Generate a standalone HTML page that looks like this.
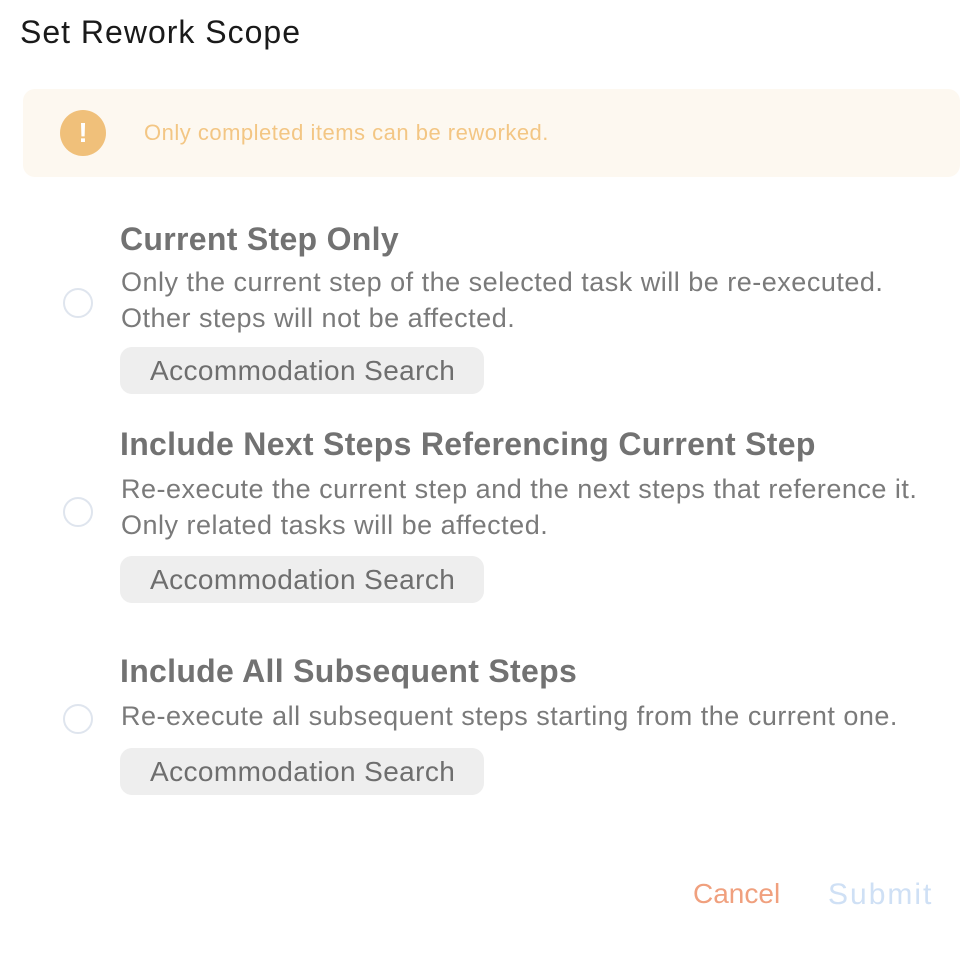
<!DOCTYPE html>
<html><head><style>
html,body{margin:0;padding:0;background:#fff;}
body{width:974px;height:970px;position:relative;overflow:hidden;font-family:"Liberation Sans",sans-serif;}
.a{position:absolute;white-space:nowrap;}
.title{left:20px;top:14px;font-size:32px;color:#1a1a1a;letter-spacing:1px;}
.alert{left:23px;top:89px;width:937px;height:88px;background:#fdf8f0;border-radius:12px;}
.ic{left:60px;top:110px;width:46px;height:46px;border-radius:50%;background:#f0c07a;color:#fff;font-weight:bold;font-size:28px;text-align:center;line-height:46px;}
.at{left:144px;top:120px;font-size:22px;color:#f3c684;letter-spacing:0.5px;}
.h{left:120px;font-size:32px;font-weight:bold;color:#727272;letter-spacing:0.3px;}
.d{left:121px;font-size:27px;color:#7a7a7a;line-height:36px;letter-spacing:0.5px;}
.chip{left:120px;width:364px;height:47px;background:#eeeeee;border-radius:12px;}
.chip span{position:absolute;left:30px;top:8px;font-size:28px;color:#6e6e6e;letter-spacing:0.4px;}
.r{left:63px;width:30px;height:30px;border:2px solid #dfe5ee;border-radius:50%;box-sizing:border-box;}
.btn{top:878px;}
</style></head><body>
<div class="a title">Set Rework Scope</div>
<div class="a alert"></div>
<div class="a ic">!</div>
<div class="a at">Only completed items can be reworked.</div>

<div class="a h" style="top:221px">Current Step Only</div>
<div class="a d" style="top:264px">Only the current step of the selected task will be re-executed.<br>Other steps will not be affected.</div>
<div class="a r" style="top:288px"></div>
<div class="a chip" style="top:347px"><span>Accommodation Search</span></div>

<div class="a h" style="top:426px">Include Next Steps Referencing Current Step</div>
<div class="a d" style="top:471px">Re-execute the current step and the next steps that reference it.<br>Only related tasks will be affected.</div>
<div class="a r" style="top:497px"></div>
<div class="a chip" style="top:556px"><span>Accommodation Search</span></div>

<div class="a h" style="top:653px">Include All Subsequent Steps</div>
<div class="a d" style="top:698px">Re-execute all subsequent steps starting from the current one.</div>
<div class="a r" style="top:704px"></div>
<div class="a chip" style="top:748px"><span>Accommodation Search</span></div>

<div class="a btn" style="left:693px;color:#f0a07e;font-size:28px;">Cancel</div>
<div class="a btn" style="left:828px;color:#cfe0f5;font-size:30px;letter-spacing:2px;">Submit</div>
</body></html>
